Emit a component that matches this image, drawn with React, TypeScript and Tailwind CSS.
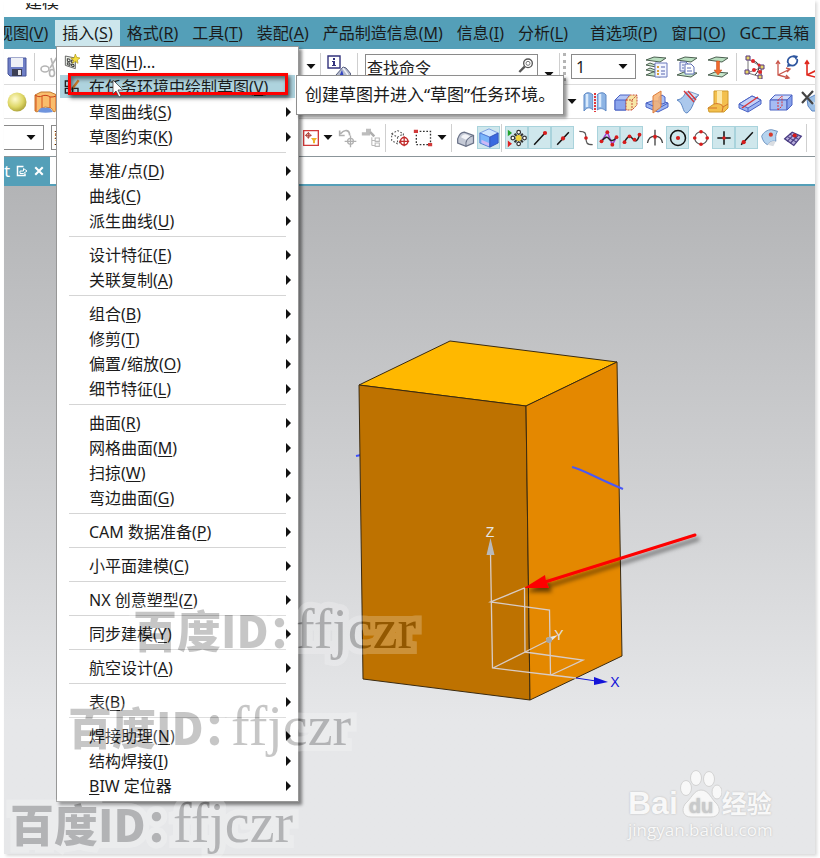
import type { ReactNode } from 'react';
import clsx from 'clsx';

type Label = { text: string; hotkey?: string; tail?: string; lead?: boolean };

const menuBar: Label[] = [
  { text: '视图', hotkey: 'V' },
  { text: '插入', hotkey: 'S' },
  { text: '格式', hotkey: 'R' },
  { text: '工具', hotkey: 'T' },
  { text: '装配', hotkey: 'A' },
  { text: '产品制造信息', hotkey: 'M' },
  { text: '信息', hotkey: 'I' },
  { text: '分析', hotkey: 'L' },
  { text: '首选项', hotkey: 'P' },
  { text: '窗口', hotkey: 'O' },
  { text: 'GC工具箱' },
];

const insertMenu: Label[][] = [
  [
    { text: '草图', hotkey: 'H', tail: '...' },
    { text: '在任务环境中绘制草图', hotkey: 'V' },
    { text: '草图曲线', hotkey: 'S' },
    { text: '草图约束', hotkey: 'K' },
  ],
  [
    { text: '基准/点', hotkey: 'D' },
    { text: '曲线', hotkey: 'C' },
    { text: '派生曲线', hotkey: 'U' },
  ],
  [
    { text: '设计特征', hotkey: 'E' },
    { text: '关联复制', hotkey: 'A' },
  ],
  [
    { text: '组合', hotkey: 'B' },
    { text: '修剪', hotkey: 'T' },
    { text: '偏置/缩放', hotkey: 'O' },
    { text: '细节特征', hotkey: 'L' },
  ],
  [
    { text: '曲面', hotkey: 'R' },
    { text: '网格曲面', hotkey: 'M' },
    { text: '扫掠', hotkey: 'W' },
    { text: '弯边曲面', hotkey: 'G' },
  ],
  [{ text: 'CAM 数据准备', hotkey: 'P' }],
  [{ text: '小平面建模', hotkey: 'C' }],
  [{ text: 'NX 创意塑型', hotkey: 'Z' }],
  [{ text: '同步建模', hotkey: 'Y' }],
  [{ text: '航空设计', hotkey: 'A' }],
  [{ text: '表', hotkey: 'B' }],
  [
    { text: '焊接助理', hotkey: 'N' },
    { text: '结构焊接', hotkey: 'I' },
    { text: 'IW 定位器', hotkey: 'B', lead: true },
  ],
];

function HotText({ label }: { label: Label }) {
  if (!label.hotkey) return <>{label.text}</>;
  const key = <span className="underline underline-offset-2">{label.hotkey}</span>;
  if (label.lead) return <>{key}{label.text}</>;
  return <>{label.text}({key}){label.tail}</>;
}

function Icon({ children, className = 'size-6' }: { children: ReactNode; className?: string }) {
  return (
    <svg viewBox="0 0 24 24" fill="none" className={clsx('shrink-0', className)} aria-hidden="true">
      {children}
    </svg>
  );
}

function Caret() {
  return (
    <svg viewBox="0 0 10 5" className="h-[5px] w-[10px] shrink-0" aria-hidden="true">
      <path d="M0.5 0h9L5 5z" fill="#111" />
    </svg>
  );
}

function Separator() {
  return <span className="h-7 w-px shrink-0 bg-[#cfcfcf]" />;
}

function ToolButton({ name, active, wide, children }: { name: string; active?: boolean; wide?: string; children: ReactNode }) {
  return (
    <button
      type="button"
      aria-label={name}
      className={clsx(
        'flex h-[23px] shrink-0 items-center justify-center',
        wide ?? 'w-[23px]',
        active && 'border border-[#a9d3dc] bg-[#cfe7ec]'
      )}
    >
      {children}
    </button>
  );
}

/* ---------- icons ---------- */

const Save = () => (
  <Icon>
    <path d="M3 3h18v18H5l-2-2z" fill="#6f7fc6" stroke="#46549a" />
    <path d="M6 3h12v9H6z" fill="#eef0f6" />
    <path d="M7 14h10v7H7z" fill="#3c3f55" />
    <path d="M13 15h3v5h-3z" fill="#e6e6ea" />
  </Icon>
);

const Scissors = () => (
  <Icon>
    <path d="M18 2l-7 11M12 3l3 12" stroke="#b5b5b5" strokeWidth="1.600" />
    <ellipse cx="6" cy="14" rx="4" ry="3" stroke="#b5b5b5" strokeWidth="1.600" />
    <ellipse cx="13" cy="18" rx="2.500" ry="3.500" stroke="#b5b5b5" strokeWidth="1.600" />
  </Icon>
);

const Sphere = () => (
  <Icon>
    <defs>
      <radialGradient id="ball" cx="0.400" cy="0.350" r="0.700">
        <stop offset="0" stopColor="#fffbd0" />
        <stop offset="0.600" stopColor="#ded766" />
        <stop offset="1" stopColor="#a89e35" />
      </radialGradient>
    </defs>
    <circle cx="12" cy="12" r="9.500" fill="url(#ball)" />
  </Icon>
);

const Shell = () => (
  <Icon>
    <path d="M1 5l6-3h9l7 3v15l-3 2-3-4-6-1-4 2-4 3-2-1z" fill="#f9bd6c" stroke="#c47a30" />
    <path d="M1 5c3 2 5 2 7 1s6-1 8 1c3 0 5 0 7-2" stroke="#c8401c" />
    <path d="M4 22c2-5 5-5 7-4 4-1 6 0 8 4-5 1-10 1-15 0z" fill="#6f94dd" />
    <path d="M8 6v12M16 7v11M2 5v16M22 5v15" stroke="#d8531e" />
  </Icon>
);

const InfoPick = () => (
  <Icon>
    <path d="M1 1h12v12H1z" fill="#fff" stroke="#33337d" strokeWidth="1.400" />
    <path d="M6 3h2v2H6zM5 6h3v4h1v1H5v-1h1V7H5z" fill="#33337d" />
    <path d="M9 20l7-8 3 1 5 6-4 5H11z" fill="#b6bccf" stroke="#555d7d" />
    <path d="M12 22l3-7 2 7z" fill="#3345c2" />
    <path d="M16 13l5 7" stroke="#f0f2f8" strokeWidth="1.500" />
  </Icon>
);

function Layers({ overlay }: { overlay: ReactNode }) {
  return (
    <Icon>
      <path d="M2 5l8-3 12 1-6 4z" fill="#b9dfc0" stroke="#4b5f50" />
      <path d="M2 20l7-3 13 1-6 4z" fill="#c6e6ca" stroke="#4b5f50" />
      {overlay}
    </Icon>
  );
}

const layerIcons = [
  <Layers
    key="list"
    overlay={
      <>
        <path d="M2 10l4-2 8 3-2 1zM2 15l4-2 8 3-2 1z" fill="#cfe8d2" stroke="#4b5f50" />
        <path d="M11 8h12v14H11z" fill="#f2f5ff" stroke="#6a78bd" />
        <path d="M13 11h2v2h-2zM13 15h2v2h-2zM13 18h2v2h-2z" fill="#d9a13a" />
        <path d="M17 12h4M17 16h4M17 19h4" stroke="#5765ad" />
      </>
    }
  />,
  <Layers
    key="copy"
    overlay={
      <>
        <path d="M5 7h6l2 2v7H5z" fill="#eef1fb" stroke="#5d6cb3" />
        <path d="M10 9h6l3 3v7h-9z" fill="#fff" stroke="#5d6cb3" />
        <path d="M12 13h4M12 16h5M7 10h2M7 13h2" stroke="#5d6cb3" />
      </>
    }
  />,
  <Layers
    key="move"
    overlay={<path d="M10.500 6h3v9h2.500l-4 5-4-5h2.500z" fill="#ef6a2c" stroke="#c9481a" strokeWidth="0.500" />}
  />,
];

const DatumPoints = () => (
  <Icon>
    <path d="M6 4v14l13 4M6 4l14 8-1 9M5 18l16-6" stroke="#777" />
    <path d="M11 6c7 1 8 8 2 14" stroke="#333" />
    <path d="M4 1h4v4H4zM3 15h4v4H3zM18 10h4v4h-4zM16 20h4v4h-4z" fill="#e8d566" stroke="#54357f" />
    <circle cx="11" cy="6" r="2" fill="#e0262a" />
    <circle cx="12" cy="15" r="2" fill="#e0262a" />
    <circle cx="18" cy="17" r="2" fill="#e0262a" />
    <circle cx="17" cy="10" r="1.500" fill="#e0262a" />
  </Icon>
);

const OrientAxes = () => (
  <Icon>
    <path d="M3 6v14l11 3M3 20l12-6M1 9l2-3 2 3M11 13l4 1-3 3M11 20l3 3-4 1" stroke="#c9564b" strokeWidth="1.300" />
    <path d="M13 8a5 5 0 0 1 7-6M22 4a5 5 0 0 1-7 6" stroke="#2e569f" strokeWidth="1.800" />
    <path d="M18 0l5 1-2 4zM13 7l4 4-5 1z" fill="#2e569f" />
  </Icon>
);

const Axes = () => (
  <Icon>
    <path d="M4 6v14l12 3M4 20l12-6M2 9l2-3 2 3" stroke="#e0281e" strokeWidth="1.600" />
  </Icon>
);

const surfaceIcons = [
  <Icon key="book">
    <path d="M1 5c2-3 6-3 9 0v15c-3-3-6-3-9 1zM14 5c3-3 7-3 9 0v16c-3-3-6-3-9-1z" fill="#8db4e4" stroke="#5d87c4" />
    <path d="M4 4v13M17 4v13" stroke="#d9e9fb" strokeWidth="2.500" />
    <path d="M10 5h4v15h-4z" fill="#e6eefa" />
    <path d="M12 3v19" stroke="#e0363a" strokeDasharray="2 1" strokeWidth="2" />
  </Icon>,
  <Icon key="block">
    <path d="M1 10l5-5h10l-4 5v10H1z" fill="#b3c5f5" stroke="#4a62c4" />
    <path d="M1 10h11v10H1z" fill="#8ba5ec" stroke="#4a62c4" />
    <path d="M12 10l4-5h7v10l-5 5h-6z" fill="#f7e6a6" stroke="#c9503c" strokeDasharray="2 1" />
    <path d="M12 10h6v10M18 10l5-5" stroke="#c9503c" strokeDasharray="2 1" />
  </Icon>,
  <Icon key="trim">
    <path d="M1 13l6-2h10l6 2v4l-10 5-12-5z" fill="#9ab4f2" stroke="#4a62c4" />
    <path d="M14 7l3-2 3 2v6l-3 1-3-1z" fill="#a9c0f5" stroke="#4a62c4" />
    <path d="M8 6l8-5v16l-8 6z" fill="#f7b272" stroke="#dd7d3a" fillOpacity="0.850" />
    <path d="M1 13l7 3M16 17l7-4" stroke="#4a62c4" />
  </Icon>,
  <Icon key="sheet">
    <path d="M1 10c6-1 7-5 9-8l6 7 7-4c-6 4-5 13-12 18-5 0-3-10-10-13z" fill="#abc8ec" stroke="#5d87c4" />
    <path d="M10 2h5l8 3-7 4z" fill="#d3e4f7" stroke="#7b9bc9" />
    <path d="M8 1l10 11M12 1l8 9" stroke="#d9353a" strokeWidth="1.400" />
  </Icon>,
  <Icon key="boss">
    <path d="M7 1h14v17l-4 4H2l-1-4 6-4z" fill="#f3c04e" stroke="#cf9a2a" />
    <path d="M10 1h5v13h-5z" fill="#fde9a8" />
    <path d="M7 14c4-1 8 0 9 3l5-3M16 17l-1 5M1 18h9" stroke="#d3742a" />
  </Icon>,
  <Icon key="slab">
    <path d="M1 14l13-8 9 4v4l-13 8-9-4z" fill="#9db6f2" stroke="#4a62c4" />
    <path d="M1 14l9 4 13-8-9-4z" fill="#c3d1f8" stroke="#4a62c4" />
    <path d="M10 18v4" stroke="#4a62c4" />
    <path d="M4 18L20 7" stroke="#d9353a" strokeWidth="1.500" />
  </Icon>,
  <Icon key="box">
    <path d="M1 10l5-5h17l-5 5z" fill="#d0dbfa" stroke="#4a62c4" />
    <path d="M1 10h17v10H1z" fill="#a6bcf3" stroke="#4a62c4" />
    <path d="M18 10l5-5v10l-5 5z" fill="#86a0ea" stroke="#4a62c4" />
    <path d="M9 20V10l4-4v10z" stroke="#d9353a" strokeDasharray="2 1" />
  </Icon>,
  <Icon key="delete">
    <path d="M7 9l8-4h8v16H12l-4-5z" fill="#9dc0e6" stroke="#5d87c4" />
    <path d="M12 12l7 4v7" stroke="#d4e5f7" strokeWidth="2" />
    <path d="M2 2l11 12M13 1L2 13" stroke="#444" strokeWidth="2.200" />
  </Icon>,
];

const snapIcons: { name: string; active?: boolean; icon: ReactNode }[] = [
  {
    name: '启用捕捉点',
    active: true,
    icon: (
      <>
        <path d="M14 4v16M6 12h16" stroke="#555" strokeWidth="1.500" />
        <circle cx="14" cy="5" r="2.200" fill="#fff" stroke="#333" strokeWidth="1.500" />
        <circle cx="14" cy="19" r="2.200" fill="#fff" stroke="#333" strokeWidth="1.500" />
        <circle cx="7" cy="12" r="2.200" fill="#fff" stroke="#333" strokeWidth="1.500" />
        <circle cx="21" cy="12" r="2.200" fill="#fff" stroke="#333" strokeWidth="1.500" />
        <path d="M9 7l10 10M19 7L9 17" stroke="#333" strokeWidth="2.500" />
        <circle cx="14" cy="12" r="3.500" fill="#f1d43c" />
        <path d="M1 2l5 4-5 4z" fill="#22a32c" />
        <path d="M1 15l5 4-5 4z" fill="#df2020" />
      </>
    ),
  },
  {
    name: '终点',
    active: true,
    icon: (
      <>
        <path d="M5 20L18 6" stroke="#111" strokeWidth="1.800" />
        <circle cx="18" cy="6" r="2.500" fill="#d61c1c" />
      </>
    ),
  },
  {
    name: '中点',
    active: true,
    icon: (
      <>
        <path d="M5 20L19 5" stroke="#111" strokeWidth="1.800" />
        <circle cx="12" cy="12.500" r="2.500" fill="#d61c1c" />
      </>
    ),
  },
  {
    name: '控制点',
    icon: (
      <>
        <path d="M4 4c7 0 8 2 8 8s1 8 8 8" stroke="#555" strokeWidth="1.500" />
        <circle cx="12" cy="12" r="2.200" fill="#d61c1c" />
      </>
    ),
  },
  {
    name: '极点',
    active: true,
    icon: (
      <>
        <path d="M3 16L10 5l6 15 5-9" stroke="#a23fd0" strokeWidth="1.800" />
        <path d="M3 16c5-6 7-6 9-3s6 3 9-2" stroke="#222" strokeWidth="1.800" />
        <circle cx="3" cy="16" r="2.300" fill="#d61c1c" />
        <circle cx="10" cy="5" r="2.300" fill="#d61c1c" />
        <circle cx="16" cy="20" r="2.300" fill="#d61c1c" />
        <circle cx="21" cy="11" r="2.300" fill="#d61c1c" />
      </>
    ),
  },
  {
    name: '定义点',
    active: true,
    icon: (
      <>
        <path d="M3 17c4-8 7-8 10-4s6 3 8-5" stroke="#222" strokeWidth="1.800" />
        <circle cx="3" cy="17" r="2.300" fill="#d61c1c" />
        <circle cx="9" cy="10" r="2.300" fill="#d61c1c" />
        <circle cx="15" cy="14" r="2.300" fill="#d61c1c" />
        <circle cx="21" cy="8" r="2.300" fill="#d61c1c" />
      </>
    ),
  },
  {
    name: '交点',
    icon: (
      <>
        <path d="M12 2v19M3 18c2-11 16-11 18 0" stroke="#444" strokeWidth="1.600" />
        <circle cx="12" cy="10.500" r="2.300" fill="#d61c1c" />
      </>
    ),
  },
  {
    name: '圆心',
    active: true,
    icon: (
      <>
        <circle cx="12" cy="12" r="9" stroke="#111" strokeWidth="1.800" />
        <circle cx="12" cy="12" r="2.500" fill="#d61c1c" />
      </>
    ),
  },
  {
    name: '象限点',
    icon: (
      <>
        <circle cx="12" cy="12" r="7.500" stroke="#555" strokeWidth="1.300" />
        <circle cx="12" cy="4.500" r="2.200" fill="#d61c1c" />
        <circle cx="12" cy="19.500" r="2.200" fill="#d61c1c" />
        <circle cx="4.500" cy="12" r="2.200" fill="#d61c1c" />
        <circle cx="19.500" cy="12" r="2.200" fill="#d61c1c" />
      </>
    ),
  },
  {
    name: '现有点',
    active: true,
    icon: (
      <>
        <path d="M12 4v16M4 12h16" stroke="#111" strokeWidth="1.800" />
        <circle cx="12" cy="12" r="2.200" fill="#d61c1c" />
      </>
    ),
  },
  {
    name: '曲线上的点',
    active: true,
    icon: (
      <>
        <path d="M5 20L19 5" stroke="#111" strokeWidth="1.800" />
        <circle cx="8" cy="17" r="2.500" fill="#d61c1c" />
      </>
    ),
  },
  {
    name: '面上的点',
    icon: (
      <>
        <path d="M2 10c2-5 7-8 12-8l7 2c-3 5-2 8-2 12-5-1-8 1-10 4-3-1-6-5-7-10z" fill="#b5d3ee" stroke="#5c86b8" />
        <path d="M9 20c2-3 5-5 10-4l-3 6z" fill="#d9dde2" />
        <circle cx="13" cy="8" r="2.500" fill="#d63a2c" />
      </>
    ),
  },
  {
    name: '有界栅格',
    icon: (
      <>
        <path d="M2 13l9-8 11 5-9 11z" fill="#b7addb" stroke="#4a3d82" strokeWidth="1.500" />
        <path d="M5 10l11 7M8 7l11 7M5 16l9-9M9 18l9-9" stroke="#4a3d82" strokeWidth="1.300" />
        <circle cx="14" cy="9" r="2.500" fill="#d61c1c" />
      </>
    ),
  },
];

function ToolbarTop() {
  return (
    <div className="flex h-9 items-center overflow-hidden border-b border-[#dcdcdc]">
      <div className="flex w-[298px] shrink-0 items-center">
        <ToolButton name="保存" wide="w-[25px]"><Save /></ToolButton>
        <span className="w-[5px]" />
        <Separator />
        <span className="w-1" />
        <ToolButton name="剪切"><Scissors /></ToolButton>
      </div>
      <ToolButton name="更多" wide="w-[18px]"><Caret /></ToolButton>
      <Separator />
      <ToolButton name="对象信息" wide="w-9"><InfoPick /></ToolButton>
      <Separator />
      <div className="relative ml-[7px] h-[26px] w-[173px] shrink-0">
        <input
          aria-label="查找命令"
          defaultValue="查找命令"
          className="h-full w-full border border-[#8a8a8a] bg-white px-px text-base leading-6 text-[#222] outline-none"
        />
        <Icon className="absolute top-1 right-1 size-4">
          <circle cx="15" cy="8" r="6.500" stroke="#555" strokeWidth="2" />
          <circle cx="15" cy="8" r="3" stroke="#777" strokeWidth="1.500" />
          <path d="M10 13l-8 8" stroke="#555" strokeWidth="3.500" />
        </Icon>
      </div>
      <button type="button" aria-label="查找选项" className="flex h-7 w-[21px] shrink-0 items-end justify-center pb-1">
        <Caret />
      </button>
      <Separator />
      <span className="mx-[3px] h-7 w-0.5 shrink-0 border-l-3 border-dotted border-[#b5b5b5]" />
      <div className="relative ml-0.5 h-[25px] w-[65px] shrink-0">
        <select aria-label="工作图层" className="h-full w-full appearance-none border border-[#8a8a8a] bg-white px-1 text-base leading-5 outline-none">
          <option>1</option>
        </select>
        <span className="pointer-events-none absolute top-2.5 right-2"><Caret /></span>
      </div>
      <span className="w-1 shrink-0" />
      {layerIcons.map((icon, i) => (
        <ToolButton key={i} name={['图层设置', '视图中可见图层', '移动至图层'][i]} wide="w-[31px]">{icon}</ToolButton>
      ))}
      <span className="w-[3px] shrink-0" />
      <Separator />
      <ToolButton name="基准点集" wide="w-[33px]"><DatumPoints /></ToolButton>
      <ToolButton name="WCS 定向" wide="w-[33px]"><OrientAxes /></ToolButton>
      <ToolButton name="WCS 原点"><Axes /></ToolButton>
    </div>
  );
}

function ToolbarFeatures() {
  return (
    <div className="flex h-[34px] items-center overflow-hidden border-b border-[#dcdcdc]">
      <div className="flex w-[560px] shrink-0 items-center">
        <ToolButton name="球" wide="w-[25px]"><Sphere /></ToolButton>
        <ToolButton name="抽壳" wide="w-[34px]"><Shell /></ToolButton>
      </div>
      <ToolButton name="更多" wide="w-[15px]"><Caret /></ToolButton>
      {surfaceIcons.map((icon, i) => (
        <ToolButton key={i} name={`特征 ${i + 1}`} wide="w-[31px]">{icon}</ToolButton>
      ))}
    </div>
  );
}

function ToolbarSnap() {
  return (
    <div className="flex h-[38px] items-center overflow-hidden border-b border-[#8b959a]">
      <div className="flex w-[298px] shrink-0 items-center gap-[7px]">
        <div className="relative h-[25px] w-10">
          <select aria-label="类型过滤器" className="h-full w-full appearance-none border border-l-0 border-[#8a8a8a] bg-white" />
          <span className="pointer-events-none absolute top-2.5 right-2"><Caret /></span>
        </div>
        <select aria-label="选择范围" className="h-[25px] w-20 appearance-none border border-[#8a8a8a] bg-white px-0.5 text-base leading-5">
          <option>整个装配</option>
        </select>
      </div>
      <ToolButton name="选择优先级" wide="w-[18px]">
        <Icon className="h-4 w-4">
          <path d="M1 1h22v22H1z" fill="#fff" stroke="#d13a3a" strokeWidth="2" />
          <path d="M8 3v10M3 8h10" stroke="#b04038" strokeWidth="1.500" />
          <circle cx="8" cy="8" r="3" stroke="#b04038" strokeWidth="1.500" />
          <path d="M12 12h9l-3 4v4h-3v-4z" fill="#f0b22a" />
        </Icon>
      </ToolButton>
      <ToolButton name="更多" wide="w-[16px]"><Caret /></ToolButton>
      <ToolButton name="撤销选择">
        <Icon className="size-5">
          <path d="M2 3v6h6M3 7c5-6 11-5 11 2" stroke="#b0b0b0" strokeWidth="2" />
          <path d="M15 9v14M8 16h14" stroke="#b0b0b0" strokeWidth="1.600" />
          <circle cx="15" cy="16" r="3.500" stroke="#b0b0b0" strokeWidth="1.500" />
        </Icon>
      </ToolButton>
      <ToolButton name="选择层级">
        <Icon className="size-5">
          <path d="M1 5h10v4H1zM6 1h6v5H6z" fill="#bdbdbd" />
          <path d="M11 5l5 5" stroke="#adadad" strokeWidth="3" />
          <path d="M13 11v10M13 15h4M13 21h4" stroke="#bababa" strokeWidth="1.300" />
          <path d="M17 12h5v4h-5zM17 18h5v4h-5z" stroke="#bababa" strokeWidth="1.300" />
        </Icon>
      </ToolButton>
      <span className="w-[3px] shrink-0" />
      <Separator />
      <span className="w-0.5 shrink-0" />
      <ToolButton name="实体选择">
        <Icon className="size-5">
          <path d="M2 7l7-4 7 4v8l-7 4-7-4zM2 7l7 4 7-4M9 11v8" stroke="#555" strokeWidth="1.300" strokeDasharray="2 2" />
          <circle cx="17" cy="16" r="4.500" fill="#fff" stroke="#c22c2c" strokeWidth="1.800" />
          <path d="M17 10v12M11 16h12" stroke="#c22c2c" strokeWidth="1.500" />
        </Icon>
      </ToolButton>
      <ToolButton name="矩形选择">
        <Icon className="size-5">
          <path d="M4 4h17v16H4z" stroke="#333" strokeWidth="1.600" strokeDasharray="2 2" />
          <path d="M1 2h5v4H1zM18 18h5v4h-5z" fill="#d13a3a" />
        </Icon>
      </ToolButton>
      <ToolButton name="更多" wide="w-4"><Caret /></ToolButton>
      <span className="w-px shrink-0" />
      <Separator />
      <span className="w-[2px] shrink-0" />
      <ToolButton name="着色">
        <Icon className="size-5">
          <path d="M2 13c2-6 5-8 8-8l11 4v9l-9 4-10-4z" fill="#c5cad6" stroke="#6b7388" strokeWidth="1.500" />
          <path d="M12 22c-1-6 2-11 9-13" stroke="#6b7388" strokeWidth="1.500" />
          <path d="M6 11c2-3 4-4 7-3l4 2-5 4z" fill="#f3f4f8" />
        </Icon>
      </ToolButton>
      <ToolButton name="带边着色" active>
        <Icon className="size-5">
          <path d="M1 6l11-5 11 5-10 5z" fill="#cfe6ff" stroke="#6f93dc" />
          <path d="M1 6l12 5v12L1 18z" fill="#7ab5fa" stroke="#4a72d0" />
          <path d="M13 11l10-5v12l-10 5z" fill="#3a6ae0" stroke="#3350b5" />
          <path d="M3 14l9 4v4l-9-4z" fill="#cdb8f5" />
        </Icon>
      </ToolButton>
      <span className="w-px shrink-0" />
      <Separator />
      <span className="w-[3px] shrink-0" />
      {snapIcons.map((s) => (
        <ToolButton key={s.name} name={s.name} active={s.active}>
          <Icon className="size-5">{s.icon}</Icon>
        </ToolButton>
      ))}
      <span className="w-0.5 shrink-0" />
      <Separator />
    </div>
  );
}

function InsertMenu() {
  return (
    <div role="menu" className="absolute top-[46px] left-14 w-[243px] border border-[#979797] bg-white pt-0.5 pb-[3px] shadow-[3px_3px_3px_rgba(0,0,0,0.45)]">
      {insertMenu.map((group, g) => (
        <div key={g}>
          {g > 0 && <div className="mr-3 ml-3 h-[9px] pt-[3px]"><div className="h-px bg-[#d5d5d5]" /></div>}
          {group.map((item, i) => {
            const first = g === 0 && i === 0;
            const picked = g === 0 && i === 1;
            return (
              <button
                key={item.text}
                type="button"
                role="menuitem"
                className="flex h-[25px] w-full items-center px-[3px] text-left text-base leading-6 text-[#1b1b1b]"
              >
                <span className={clsx('flex h-[23px] flex-1 items-center', picked && 'bg-[#aed3de]')}>
                  <span className="flex w-[29px] shrink-0 justify-start pl-1">
                    {first && (
                      <Icon className="size-4">
                        <path d="M2 3l15 3v16L2 17z" fill="#f0f4ec" stroke="#555" strokeWidth="1.300" />
                        <path d="M5 7l4 1v4l-4-1zM11 9h3v4h-3zM5 13l4 1v3l-4-1zM11 15l4 1v3l-4-1z" stroke="#333" strokeWidth="1.500" />
                        <path d="M17 0l2 5 5 1-4 3 1 5-4-3-4 3 1-5-4-3h5z" fill="#f5dd3b" stroke="#b1991a" />
                      </Icon>
                    )}
                    {picked && (
                      <Icon className="size-4">
                        <path d="M9 3H2v8h7M2 14h7v7H2zM13 14h8v7h-8zM9 3v8" stroke="#222" strokeWidth="2" />
                        <path d="M22 2L12 15" stroke="#c9792a" strokeWidth="3.500" />
                        <path d="M12 12l-1 5 4-2z" fill="#222" />
                      </Icon>
                    )}
                  </span>
                  <span className="flex-1 whitespace-nowrap"><HotText label={item} /></span>
                  {!first && !picked && (
                    <svg viewBox="0 0 5 10" className="mr-1 h-[10px] w-[5px]" aria-hidden="true">
                      <path d="M0 0l5 5-5 5z" fill="#111" />
                    </svg>
                  )}
                </span>
              </button>
            );
          })}
        </div>
      ))}
    </div>
  );
}

function Model() {
  return (
    <svg viewBox="4 186 811 668" className="h-[668px] w-full" role="img" aria-label="长方体模型">
      <defs>
        <filter id="arrowShadow" x="-10%" y="-30%" width="130%" height="180%">
          <feDropShadow dx="3" dy="4" stdDeviation="2" floodColor="#000" floodOpacity="0.550" />
        </filter>
      </defs>
      <path d="M356 456l5-1" stroke="#3c50ff" strokeWidth="2" />
      <g stroke="#3a2a10" strokeLinejoin="round">
        <path d="M359 385l91-44 167 21-91 44z" fill="#ffb800" />
        <path d="M359 385l167 21 4 294-167-21z" fill="#be7200" />
        <path d="M526 406l91-44 5 294-92 44z" fill="#e48800" />
      </g>
      <path d="M572 467c10 2 24 11 51 22" stroke="#4a58f5" strokeWidth="2" fill="none" />
      <g stroke="#d8ccc6" strokeWidth="1.300" fill="none">
        <path d="M490.500 553l2 115 58 7-1-65-59-8 34-14 0.500 64-32 16" />
        <path d="M525 652l58 8-32 15M525 652l24-12M551 675l25 3" />
      </g>
      <path d="M576 678l20 3" stroke="#1414d8" />
      <path d="M490.500 538l4 17h-8z" fill="#b9b9b9" />
      <path d="M594 677l14 5-14 3z" fill="#1414d8" />
      <path d="M546 638l12-3-9 8z" fill="#e6e6e6" />
      <circle cx="549" cy="640" r="3" fill="#a6a6a6" />
      <g fontSize="14" fontFamily="Liberation Sans, sans-serif" textAnchor="middle">
        <text x="490" y="537" fill="#e6e6e6">Z</text>
        <text x="559" y="640" fill="#e0e0e0">Y</text>
        <text x="615" y="687" fill="#1414d8">X</text>
      </g>
      <g filter="url(#arrowShadow)">
        <path d="M695 535L545 582" stroke="#fe0000" strokeWidth="3" strokeLinecap="round" />
        <path d="M524 588l21-13 1 6 3 7z" fill="#fe0000" />
      </g>
    </svg>
  );
}

function Watermark({ place }: { place: string }) {
  return (
    <div
      aria-hidden="true"
      className={clsx(
        'pointer-events-none absolute flex items-baseline whitespace-nowrap text-black opacity-[0.22] [-webkit-text-stroke:12px_white] [paint-order:stroke_fill] [stroke-linejoin:round]',
        place
      )}
    >
      <span className="w-[163px] font-['Noto_Sans_CJK_SC',sans-serif] text-[44px] leading-[60px] font-black">百度ID：</span>
      <span className="font-['Liberation_Serif',serif] text-[56px] leading-[60px]">ffjczr</span>
    </div>
  );
}

function BaiduMark() {
  return (
    <div className="absolute top-[768px] left-[628px] text-[#f8f8f8] [text-shadow:0_0_2px_#b5b5b5]">
      <div className="flex h-[50px] items-end">
        <span className="font-['Liberation_Sans',sans-serif] text-[32px] leading-[30px] font-bold">Bai</span>
        <svg viewBox="0 0 44 50" className="h-[50px] w-11" aria-hidden="true">
          <g fill="#f8f8f8" stroke="#d3d3d3">
            <ellipse cx="8" cy="20" rx="5.500" ry="7.500" />
            <ellipse cx="18" cy="10" rx="5.500" ry="7.500" />
            <ellipse cx="31" cy="11" rx="5.500" ry="7.500" />
            <ellipse cx="39" cy="24" rx="5" ry="7" />
            <path d="M23 22c8 0 10 9 16 14 5 7 1 13-6 13H13c-8 0-10-7-6-13 6-5 9-14 16-14z" />
          </g>
          <text x="23" y="45" textAnchor="middle" fontSize="20" fontWeight="bold" fontFamily="Liberation Sans, sans-serif" fill="#c9cacb">du</text>
        </svg>
        <span className="text-[25px] leading-[30px] font-bold">经验</span>
      </div>
      <div className="font-['Open_Sans',sans-serif] text-[17px] leading-6">jingyan.baidu.com</div>
    </div>
  );
}

export default function App() {
  return (
    <div className="relative overflow-hidden bg-white pr-[5px] pb-1 pl-1 font-['Noto_Sans','Noto_Sans_CJK_SC',sans-serif] text-[#1b1b1b]">
      <div className="shadow-[2px_2px_3px_rgba(0,0,0,0.15)]">
        <header className="h-[17px] pt-[3px]">
          <div className="flex h-[7px] items-end overflow-hidden pl-[21px] text-[17px] leading-4">建模</div>
        </header>

        <nav className="flex h-8 items-center overflow-hidden bg-[#549fb8]">
          {menuBar.map((item, i) => (
            <button
              key={item.text}
              type="button"
              className={clsx(
                'h-[26px] shrink-0 px-[7px] text-base leading-6 whitespace-nowrap',
                i === 0 && '-ml-3.5',
                i === 1 && 'bg-[#cde6ec]',
                i === 8 && 'ml-2'
              )}
            >
              <HotText label={item} />
            </button>
          ))}
        </nav>

        <ToolbarTop />
        <ToolbarFeatures />
        <ToolbarSnap />

        <div className="flex h-[29px] border-b-2 border-[#549fb8]">
          <button type="button" className="flex w-[46px] items-center justify-end gap-1.5 overflow-hidden bg-[#549fb8] pr-1.5 text-base leading-6 text-white">
            rt
            <Icon className="h-3 w-3">
              <path d="M15 3H3v18h15v-4" stroke="#fff" strokeWidth="3" />
              <path d="M8 17v-5h7V7l7 5-7 5z" stroke="#fff" strokeWidth="2" />
            </Icon>
            <Icon className="h-2.5 w-2.5">
              <path d="M3 3l18 18M21 3L3 21" stroke="#fff" strokeWidth="5" />
            </Icon>
          </button>
        </div>

        <main className="bg-linear-to-b from-[#b3b4b6] to-[#e6e7e9] to-80%">
          <Model />
        </main>
      </div>

      <InsertMenu />

      <div role="tooltip" className="absolute top-[75px] left-[296px] border border-[#8f8f8f] bg-white px-2 text-[17px] leading-[38px] whitespace-nowrap shadow-[3px_3px_3px_rgba(0,0,0,0.4)]">
        创建草图并进入“草图”任务环境。
      </div>

      {/* highlight frame and pointer over the picked command */}
      <div className="pointer-events-none absolute top-[73px] left-[68px] h-[22px] w-[220px] border-3 border-[#fe0000] shadow-[2px_3px_4px_rgba(0,0,0,0.6),inset_2px_3px_4px_rgba(0,0,0,0.5)]" />
      <svg viewBox="0 0 12 19" className="pointer-events-none absolute top-[79px] left-28 h-[19px] w-3" aria-hidden="true">
        <path d="M1 1v14l3-3 3 6 2-1-3-6h5z" fill="#fff" stroke="#444" strokeWidth="0.800" />
      </svg>

      <Watermark place="top-[599px] left-[133px]" />
      <Watermark place="top-[696px] left-[68px]" />
      <Watermark place="top-[793px] left-[10px]" />
      <BaiduMark />
    </div>
  );
}
